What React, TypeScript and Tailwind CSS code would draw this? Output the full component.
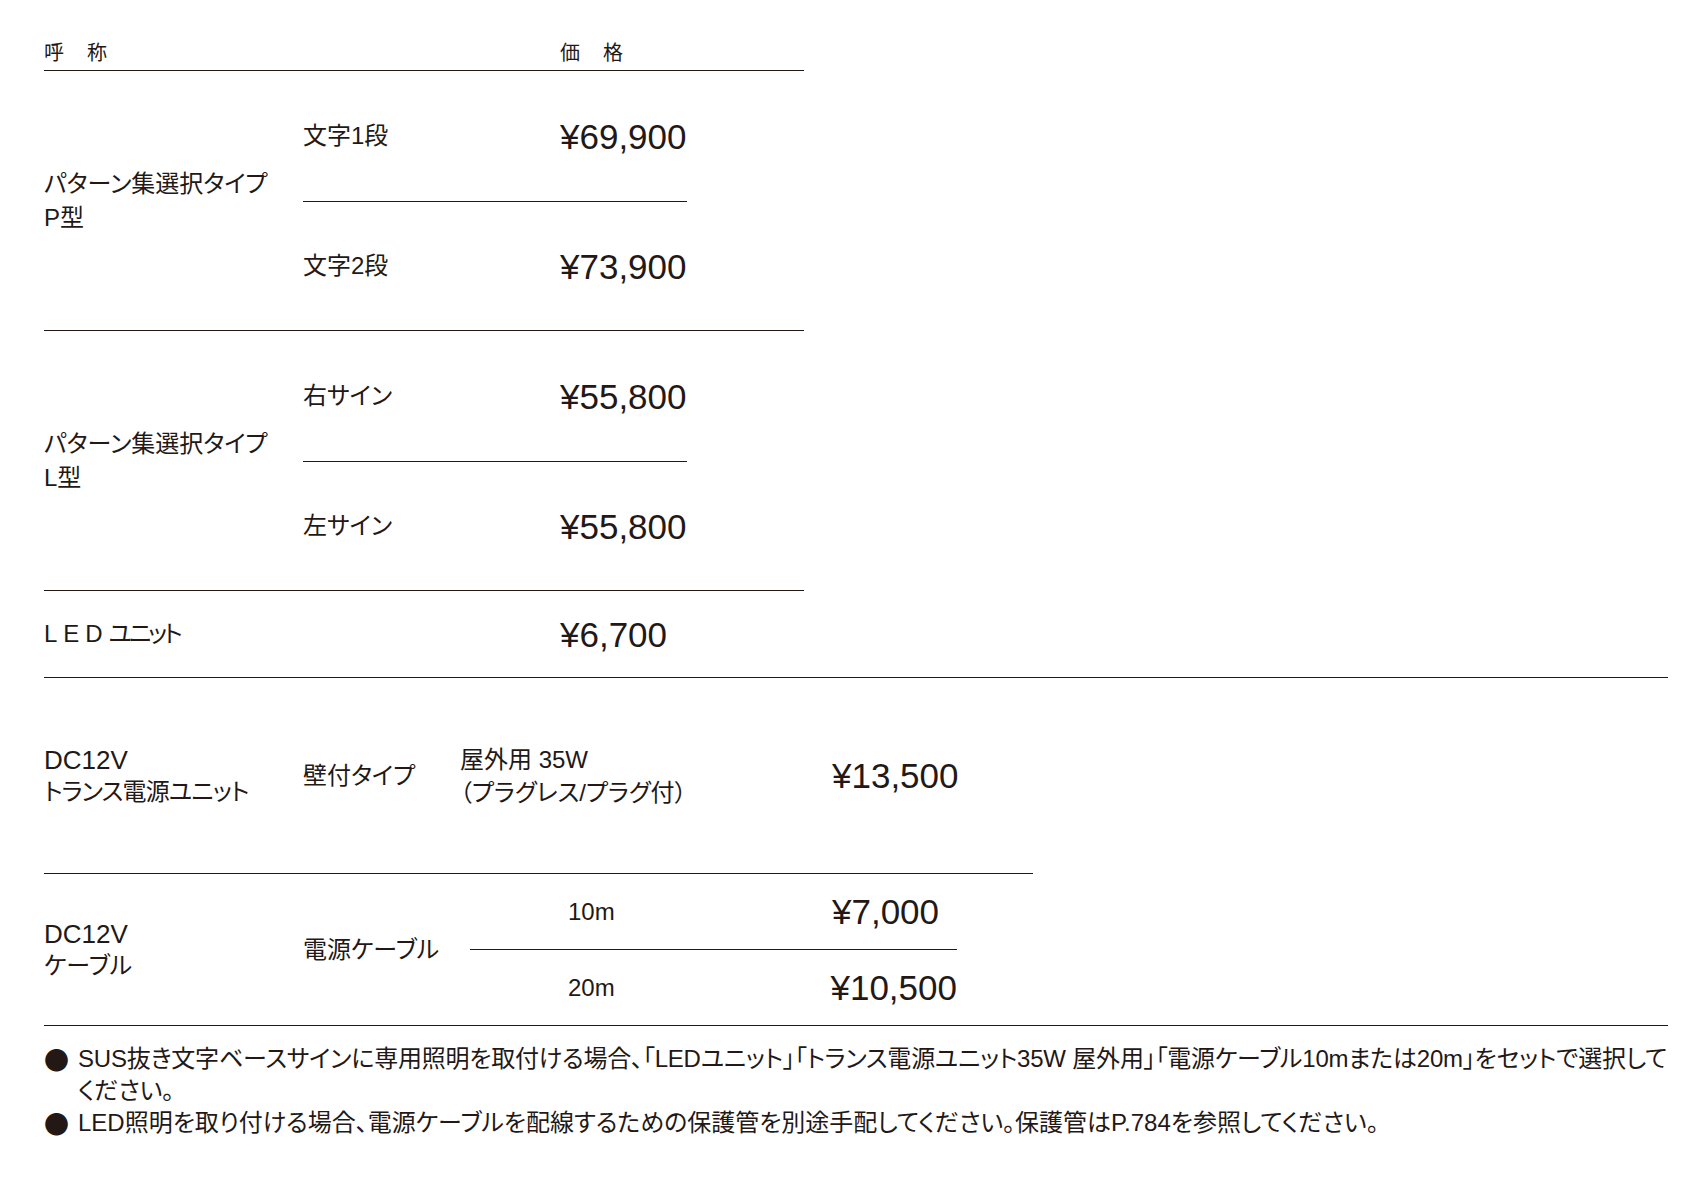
import type { ReactNode } from 'react'

function Rule({ className = '' }: { className?: string }) {
  return <div className={`h-px bg-[#231815] ${className}`} />
}

function Price({ children }: { children: ReactNode }) {
  return <div className="text-[35px] leading-none">{children}</div>
}

type Sub = { label: string; price: string }

function SplitRow({ lines, subs }: { lines: string[]; subs: [Sub, Sub] }) {
  return (
    <div className="flex w-[760px] items-center text-[24px]">
      <div className="w-[259px] leading-[34px]">
        {lines.map((l) => (
          <div key={l}>{l}</div>
        ))}
      </div>
      <div className="flex w-[384px] flex-col">
        <div className="flex h-[130px] items-center">
          <div className="w-[257px]">{subs[0].label}</div>
          <Price>{subs[0].price}</Price>
        </div>
        <Rule />
        <div className="flex h-[128px] items-center">
          <div className="w-[257px]">{subs[1].label}</div>
          <Price>{subs[1].price}</Price>
        </div>
      </div>
    </div>
  )
}

export default function App() {
  return (
    <div className="min-h-[1182px] w-[1708px] bg-white pl-[44px] font-['Liberation_Sans','Noto_Sans_CJK_JP',sans-serif] text-[#231815] [font-feature-settings:'palt']">
      {/* column headings */}
      <div className="flex h-[70px] w-[760px] items-end pb-[7px] text-[20px] leading-[20px] tracking-[1.5px]">
        <div className="w-[516px]">呼　称</div>
        <div>価　格</div>
      </div>
      <Rule className="w-[760px]" />

      <SplitRow
        lines={['パターン集選択タイプ', 'P型']}
        subs={[
          { label: '文字1段', price: '¥69,900' },
          { label: '文字2段', price: '¥73,900' },
        ]}
      />
      <Rule className="w-[760px]" />

      <SplitRow
        lines={['パターン集選択タイプ', 'L型']}
        subs={[
          { label: '右サイン', price: '¥55,800' },
          { label: '左サイン', price: '¥55,800' },
        ]}
      />
      <Rule className="w-[760px]" />

      <div className="flex h-[86px] items-center text-[24px]">
        <div className="w-[516px]">
          <span className="tracking-[6px]">LED</span>
          <span className="tracking-[-3px]">ユニット</span>
        </div>
        <Price>¥6,700</Price>
      </div>
      <Rule className="w-[1624px]" />

      {/* transformer */}
      <div className="flex h-[195px] items-center text-[24px]">
        <div className="w-[259px] leading-[31px]">
          <div className="text-[26px]">DC12V</div>
          <div className="tracking-[-0.8px]">トランス電源ユニット</div>
        </div>
        <div className="w-[157px]">壁付タイプ</div>
        <div className="w-[372px] leading-[33px]">
          <div>屋外用 35W</div>
          <div>（プラグレス/プラグ付）</div>
        </div>
        <Price>¥13,500</Price>
      </div>
      <Rule className="w-[989px]" />

      {/* cable */}
      <div className="flex h-[151px] items-center text-[24px]">
        <div className="w-[259px] leading-[32px]">
          <div className="text-[26px]">DC12V</div>
          <div>ケーブル</div>
        </div>
        <div className="w-[167px]">電源ケーブル</div>
        <div className="flex w-[487px] flex-col">
          <div className="flex h-[75px] items-center">
            <div className="w-[362px] pl-[98px]">10m</div>
            <Price>¥7,000</Price>
          </div>
          <Rule />
          <div className="flex h-[75px] items-center">
            <div className="w-[362px] pl-[98px]">20m</div>
            <Price>¥10,500</Price>
          </div>
        </div>
      </div>
      <Rule className="w-[1624px]" />

      {/* notes */}
      <div className="mt-[17px] text-[24px] leading-[32px]">
        <div className="flex">
          <span className="w-[34px] shrink-0 font-['Noto_Sans_CJK_JP',sans-serif] text-[25px]">●</span>
          <div className="whitespace-nowrap tracking-[-0.2px]">
            SUS抜き文字ベースサインに専用照明を取付ける場合、「LEDユニット」「トランス電源ユニット35W 屋外用」「電源ケーブル10mまたは20m」をセットで選択して
            <br />
            ください。
          </div>
        </div>
        <div className="flex">
          <span className="w-[34px] shrink-0 font-['Noto_Sans_CJK_JP',sans-serif] text-[25px]">●</span>
          <div className="whitespace-nowrap">
            LED照明を取り付ける場合、電源ケーブルを配線するための保護管を別途手配してください。保護管はP.784を参照してください。
          </div>
        </div>
      </div>
    </div>
  )
}
